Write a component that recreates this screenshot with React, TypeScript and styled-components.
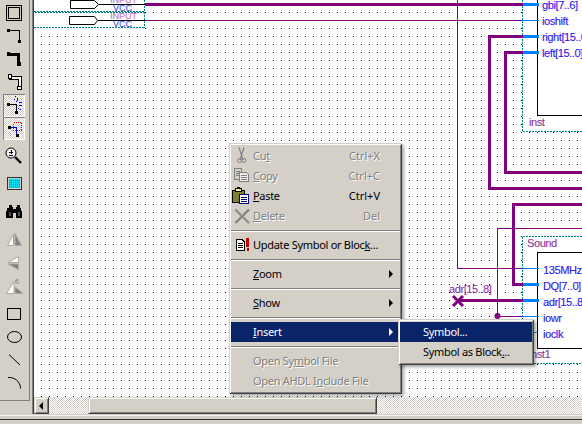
import React from "react";
import styled, { createGlobalStyle } from "styled-components";

const Global = createGlobalStyle`
  html, body { margin: 0; padding: 0; background: #d4d0c8; }
  #root { width: 582px; height: 424px; overflow: hidden; }
`;

const Root = styled.div`
  position: relative;
  width: 582px;
  height: 424px;
  overflow: hidden;
  background: #d4d0c8;
  display: flex;
  flex-direction: column;
  font-family: "Noto Sans", "Liberation Sans", sans-serif;
`;
const Workspace = styled.div`
  display: flex;
  height: 414px;
`;
const DockColumn = styled.div`
  width: 32px;
  flex: none;
`;
const Dock = styled.div`
  width: 30px;
  height: 401px;
  box-sizing: border-box;
  border-right: 1px solid #808080;
  border-bottom: 1px solid #808080;
  padding: 2px 0 0 3px;
  display: flex;
  flex-direction: column;
  gap: 5px;
`;
const ToolGroup = styled.div`
  display: flex;
  flex-direction: column;
`;
const ToolButton = styled.div<{ $on?: boolean }>`
  width: 22px;
  height: 23px;
  flex: none;
  box-sizing: border-box;
  ${(p) =>
    p.$on &&
    `background: repeating-conic-gradient(#d4d0c8 0 25%, #fff 0 50%) 0 0 / 2px 2px;
     box-shadow: inset 1px 1px 0 #808080, inset -1px -1px 0 #fff;`}
  svg { display: block; }
`;
const ViewColumn = styled.div`
  flex: 1;
  display: flex;
  flex-direction: column;
  border-left: 1px solid #808080;
  box-shadow: inset 1px 0 0 #404040;
  padding-left: 2px;
  min-width: 0;
`;
const Canvas = styled.div`
  position: relative;
  height: 397px;
  overflow: hidden;
  background: #fff;
  margin-left: -1px;
  svg { display: block; }
`;
const Label = styled.span<{ $x: number; $y: number; $tone: "pin" | "name" | "input" | "vcc" }>`
  position: absolute;
  left: ${(p) => p.$x}px;
  top: ${(p) => p.$y}px;
  font-family: "Liberation Sans", Arial, sans-serif;
  font-size: ${(p) => (p.$tone === "input" || p.$tone === "vcc" ? 9 : 11)}px;
  line-height: ${(p) => (p.$tone === "input" || p.$tone === "vcc" ? 8 : 12)}px;
  letter-spacing: ${(p) => (p.$tone === "input" || p.$tone === "vcc" ? 0 : -0.4)}px;
  white-space: nowrap;
  color: ${(p) =>
    p.$tone === "pin"
      ? "#2020f0"
      : p.$tone === "name"
      ? "#903090"
      : p.$tone === "input"
      ? "#d070a8"
      : "#3050f0"};
  text-shadow: ${(p) =>
    p.$tone === "pin" || p.$tone === "vcc"
      ? "0.5px 0 0 rgba(210,80,240,.35)"
      : "0.5px 0 0 rgba(90,90,255,.25)"};
`;
const Scrollbar = styled.div`
  height: 17px;
  display: flex;
  margin-left: -1px;
  background: repeating-conic-gradient(#d4d0c8 0 25%, #fff 0 50%) 0 0 / 2px 2px;
`;
const ScrollButton = styled.div`
  width: 15px;
  flex: none;
  box-sizing: border-box;
  background: #d4d0c8;
  border-top: 1px solid #d4d0c8;
  border-left: 1px solid #d4d0c8;
  border-right: 1px solid #404040;
  border-bottom: 1px solid #404040;
  box-shadow: inset 1px 1px 0 #fff, inset -1px -1px 0 #808080;
  display: flex;
  align-items: center;
  justify-content: center;
  svg { display: block; }
`;
const ScrollGap = styled.div`
  width: 39px;
  flex: none;
`;
const ScrollThumb = styled(ScrollButton)`
  width: 289px;
`;
const Footer = styled.div`
  height: 10px;
  box-sizing: border-box;
  background: #d4d0c8;
  padding-top: 1px;
  display: flex;
  flex-direction: column;
`;
const FooterLight = styled.div`
  height: 1px;
  background: #f4f2ee;
`;
const FooterDark = styled.div`
  height: 1px;
  margin-top: 3px;
  background: #303030;
`;

const Menu = styled.div<{ $x: number; $y: number; $w: number }>`
  position: absolute;
  left: ${(p) => p.$x}px;
  top: ${(p) => p.$y}px;
  width: ${(p) => p.$w}px;
  box-sizing: border-box;
  padding: 3px 2px;
  background: #d4d0c8;
  box-shadow: inset 1px 1px 0 #d4d0c8, inset -1px -1px 0 #404040, inset 2px 2px 0 #fff,
    inset -2px -2px 0 #808080, 2px 2px 3px rgba(0, 0, 0, 0.35);
  font-size: 11px;
`;
const Item = styled.div<{ $active?: boolean; $disabled?: boolean; $indent: number }>`
  display: flex;
  align-items: center;
  height: 20px;
  box-sizing: border-box;
  padding-left: ${(p) => p.$indent}px;
  padding-right: 20px;
  padding-bottom: 2px;
  position: relative;
  background: ${(p) => (p.$active ? "#0a246a" : "transparent")};
  color: ${(p) => (p.$active ? "#fff" : p.$disabled ? "#808080" : "#000")};
  text-shadow: ${(p) => (p.$disabled ? "1px 1px 0 #fff" : "none")};
  white-space: nowrap;
  u { text-underline-offset: 1px; }
`;
const ItemIcon = styled.span`
  position: absolute;
  left: 1px;
  top: 0;
  width: 20px;
  height: 20px;
  svg { display: block; }
`;
const ItemText = styled.span`
  flex: 1;
  letter-spacing: -0.3px;
`;
const Shortcut = styled.span`
  margin-left: auto;
`;
const Arrow = styled.span<{ $active?: boolean }>`
  position: absolute;
  right: 7px;
  top: 6px;
  width: 0;
  height: 0;
  border-left: 4px solid ${(p) => (p.$active ? "#fff" : "#000")};
  border-top: 4px solid transparent;
  border-bottom: 4px solid transparent;
`;
const Separator = styled.div`
  height: 9px;
  display: flex;
  align-items: center;
  &::before {
    content: "";
    display: block;
    flex: 1;
    height: 1px;
    background: #808080;
    border-bottom: 1px solid #fff;
  }
`;

type Wire = [number, number, number, number, string?];
const P = "#800080";
const B = "#0080ff";
const wires: Wire[] = [
  [145, 3, 378, 3],
  [523, 3, 16, 3, B],
  [144, 20, 378, 1],
  [522, 20, 17, 1, B],
  [457, 0, 1, 269],
  [457, 268, 65, 1],
  [522, 268, 17, 1, B],
  [488, 35, 35, 3],
  [523, 35, 16, 3, B],
  [488, 35, 3, 155],
  [488, 187, 94, 3],
  [504, 51, 19, 3],
  [523, 51, 16, 3, B],
  [504, 51, 3, 123],
  [504, 171, 78, 3],
  [512, 203, 70, 3],
  [512, 203, 3, 83],
  [512, 283, 11, 3],
  [523, 283, 16, 3, B],
  [497, 228, 85, 1],
  [497, 228, 1, 88],
  [497, 316, 26, 1],
  [522, 316, 17, 1, B],
  [457, 299, 66, 3],
  [523, 299, 16, 3, B],
  [522, 332, 16, 1, B],
  [99, 4, 46, 1, "#000"],
  [98, 20, 47, 1, "#000"],
];

const Diagram = () => (
  <svg width={548} height={397} viewBox="34 0 548 397" shapeRendering="crispEdges">
    <defs>
      <pattern id="dots" x={1} y={4} width={8} height={8} patternUnits="userSpaceOnUse">
        <rect width={1} height={1} fill="#000" />
      </pattern>
    </defs>
    <rect x={34} y={0} width={548} height={397} fill="url(#dots)" />
    <rect x={34} y={0} width={111} height={29} fill="#fff" />
    <rect x={522} y={0} width={60} height={132} fill="#fff" />
    <rect x={522} y={236} width={60} height={128} fill="#fff" />
    <g stroke="#008080" strokeDasharray="2 1" fill="none">
      <path d="M34 11.5H145M35 12.5H145M34 27.5H145M144.5 0V28" />
      <path d="M522.5 0V131.5H582M582 236.5H522.5V363.5H582" />
    </g>
    <g fill="#fff" stroke="#000" shapeRendering="auto">
      <path d="M70.5 .5H94.5L98.5 4.5L94.5 8.5H70.5Z" />
      <path d="M69.5 16.5H94.5L97.5 20.5L94.5 24.5H69.5Z" />
    </g>
    <rect x={537.5} y={-2} width={60} height={117.5} fill="#fff" stroke="#000" />
    <rect x={537.5} y={252.5} width={60} height={96} fill="#fff" stroke="#000" />
    {wires.map(([x, y, w, h, c], i) => (
      <rect key={i} x={x} y={y} width={w} height={h} fill={c ?? P} />
    ))}
    <circle cx={497.5} cy={316} r={3} fill={P} shapeRendering="auto" />
    <path d="M453 296L463 306M463 296L453 306" stroke={P} strokeWidth={3} shapeRendering="auto" />
  </svg>
);

const Slot = ({ children }: { children: React.ReactNode }) => (
  <svg width={22} height={23} viewBox="0 0 22 23">
    {children}
  </svg>
);

const tools: { on?: boolean; draw: React.ReactNode }[][] = [
  [
    {
      draw: (
        <g fill="none" stroke="#000" shapeRendering="crispEdges">
          <rect x={3.5} y={3.5} width={15} height={15} />
          <rect x={5.5} y={5.5} width={11} height={11} />
        </g>
      ),
    },
    {
      draw: (
        <g shapeRendering="crispEdges">
          <path d="M6 5.5H16.5V16" fill="none" stroke="#000" />
          <rect x={4} y={4} width={3} height={3} />
          <rect x={15} y={15} width={3} height={3} />
        </g>
      ),
    },
    {
      draw: (
        <g shapeRendering="crispEdges">
          <rect x={4} y={5} width={13} height={3} />
          <rect x={14} y={5} width={3} height={11} />
          <rect x={4} y={4} width={3} height={4} />
          <rect x={14} y={14} width={4} height={4} />
        </g>
      ),
    },
    {
      draw: (
        <g fill="none" shapeRendering="crispEdges">
          <path d="M6 6.5H16.5V18" stroke="#000" strokeWidth={4} />
          <path d="M6 6.5H16.5V18" stroke="#fff" strokeWidth={2} />
          <rect x={5.5} y={3.5} width={3} height={4} fill="#fff" stroke="#000" />
          <rect x={14.5} y={15.5} width={4} height={3} fill="#fff" stroke="#000" />
        </g>
      ),
    },
    {
      on: true,
      draw: (
        <g shapeRendering="crispEdges">
          <path d="M6 10.5H13.5V17" fill="none" stroke="#000" />
          <rect x={4} y={9} width={3} height={3} />
          <rect x={12} y={17} width={3} height={3} />
          <path
            d="M11 5h1v1h-1zM13 7h1v1h-1zM14 4h1v3h-1zM16 8h3v1h-3zM16 11h3v1h-3zM15 14h1v1h-1zM17 15h1v1h-1zM12 2h1v1h-1z"
            fill="#0000ff"
          />
        </g>
      ),
    },
    {
      on: true,
      draw: (
        <g shapeRendering="crispEdges">
          <rect x={10.5} y={5.5} width={8} height={8} fill="none" stroke="#e00000" strokeDasharray="1 1" />
          <path d="M7 10.5H13.5V17" fill="none" stroke="#0000e0" />
          <rect x={5} y={9} width={3} height={3} />
          <rect x={13} y={17} width={3} height={3} />
        </g>
      ),
    },
  ],
  [
    {
      draw: (
        <g fill="none" stroke="#000">
          <circle cx={8} cy={8} r={5} fill="#f4f4f4" />
          <path d="M12 12L18 18" strokeWidth={2.4} />
          <path d="M8 5V9M6 7H10M6 10.5H10" strokeWidth={1} shapeRendering="crispEdges" />
        </g>
      ),
    },
  ],
  [
    {
      draw: (
        <g shapeRendering="crispEdges">
          <rect x={4} y={4} width={15} height={13} fill="#303030" />
          <rect x={5} y={5} width={13} height={11} fill="#d4d0c8" />
          <rect x={6} y={6} width={11} height={9} fill="#00d8f0" />
          <path d="M6 7.5H17M6 9.5H17M6 11.5H17M6 13.5H17" stroke="#2080e0" strokeDasharray="1 1" />
        </g>
      ),
    },
  ],
  [
    {
      draw: (
        <g shapeRendering="crispEdges">
          <path d="M6 4h3v2h1v2h3V6h1V4h3v3h1v3h1v7h-6v-5h-3v5H3v-7h1V7h2z" />
          <path d="M6 11h2v4H6zM15 11h2v4h-2z" fill="#505050" />
        </g>
      ),
    },
  ],
  [
    {
      draw: (
        <g>
          <path d="M4.5 16.5L10.5 5V16.5Z" fill="#fff" stroke="#a8a8a4" />
          <path d="M12 4.5L18.5 16.5H12Z" fill="#808080" stroke="#a8a8a4" />
        </g>
      ),
    },
    {
      draw: (
        <g>
          <path d="M15.5 4.5L5 10.5H15.5Z" fill="#fff" stroke="#a8a8a4" />
          <path d="M5 12L15.5 17.5V12Z" fill="#808080" stroke="#a8a8a4" />
        </g>
      ),
    },
    {
      draw: (
        <g>
          <path d="M3.5 18.5L11 6V18.5Z" fill="#fff" stroke="#a8a8a4" />
          <path d="M12 12L20 18.5H12Z" fill="#808080" stroke="#a8a8a4" />
          <path d="M13 8V5M13 5H16M16 7L14 9" stroke="#808080" fill="none" />
        </g>
      ),
    },
  ],
  [
    { draw: <rect x={4.5} y={5.5} width={13} height={11} fill="none" stroke="#000" shapeRendering="crispEdges" /> },
    { draw: <ellipse cx={11.5} cy={11} rx={7} ry={5.5} fill="none" stroke="#000" /> },
    { draw: <path d="M6 5.5L17 16" stroke="#000" fill="none" /> },
    { draw: <path d="M5 5.5C11 5 17.5 9 17.5 16.5" stroke="#000" fill="none" /> },
  ],
];

const Icon = ({ children }: { children: React.ReactNode }) => (
  <ItemIcon>
    <svg width={20} height={20} viewBox="0 0 20 20">
      {children}
    </svg>
  </ItemIcon>
);

const ScissorsIcon = () => (
  <Icon>
    <g fill="none" stroke="#808080">
      <path d="M7 1.5L9.5 9L8 14M12 1.5L9.5 9L11 14" strokeWidth={1.2} />
      <circle cx={7.5} cy={14.5} r={2} />
      <circle cx={12} cy={14.5} r={2} />
    </g>
  </Icon>
);
const CopyIcon = () => (
  <Icon>
    <g fill="#d4d0c8" stroke="#808080" shapeRendering="crispEdges">
      <path d="M2.5 2.5H9.5V13.5H2.5Z" />
      <path d="M7.5 6.5H14.5L16.5 8.5V15.5H7.5Z" fill="#eeece8" />
      <path d="M4 5.5H8M4 7.5H7M4 9.5H7M9 9.5H15M9 11.5H15M9 13.5H15" />
    </g>
  </Icon>
);
const PasteIcon = () => (
  <Icon>
    <g shapeRendering="crispEdges">
      <rect x={0.5} y={4.5} width={12} height={12} fill="#808030" stroke="#000" />
      <rect x={3.5} y={2.5} width={6} height={3} fill="#ffff80" stroke="#000" />
      <rect x={5} y={1} width={3} height={2} fill="#000" />
      <rect x={7.5} y={8.5} width={9} height={9} fill="#fff" stroke="#000080" />
      <path d="M9 11.5H15M9 13.5H15M9 15.5H15" stroke="#000080" />
    </g>
  </Icon>
);
const DeleteIcon = () => (
  <Icon>
    <path d="M3.5 3.5L17 17M17 3.5L3.5 17" stroke="#808080" strokeWidth={2.2} fill="none" />
    <path d="M4 3.5L17 16.5" stroke="#a8a8a4" strokeWidth={1} fill="none" />
  </Icon>
);
const UpdateIcon = () => (
  <Icon>
    <g shapeRendering="crispEdges">
      <path d="M4.5 4.5H10L12 6.5V15.5H4.5Z" fill="#fff" stroke="#000" />
      <path d="M6 8.5H10.5M6 10.5H10.5M6 12.5H10.5" stroke="#000" />
      <rect x={14} y={3} width={3} height={9} fill="#c00000" />
      <rect x={15} y={13} width={2} height={3} fill="#c00000" />
    </g>
  </Icon>
);

const Text = ({ pre, u, post }: { pre?: string; u: string; post?: string }) => (
  <ItemText>
    {pre}
    <u>{u}</u>
    {post}
  </ItemText>
);

const labels: [number, number, "pin" | "name" | "input" | "vcc", string][] = [
  [76, -4, "input", "INPUT"],
  [79, 4, "vcc", "VCC"],
  [76, 12, "input", "INPUT"],
  [79, 20, "vcc", "VCC"],
  [508, -1, "pin", "gbi[7..6]"],
  [508, 15, "pin", "ioshift"],
  [508, 31, "pin", "right[15..0]"],
  [508, 47, "pin", "left[15..0]"],
  [495, 116, "name", "inst"],
  [493, 237, "name", "Sound"],
  [509, 264, "pin", "135MHz"],
  [509, 280, "pin", "DQ[7..0]"],
  [509, 296, "pin", "adr[15..8]"],
  [509, 312, "pin", "iowr"],
  [509, 328, "pin", "ioclk"],
  [495, 348, "name", "inst1"],
  [415, 283, "name", "adr[15..8]"],
];

export default function App() {
  return (
    <Root>
      <Global />
      <Workspace>
        <DockColumn>
          <Dock>
            {tools.map((group, g) => (
              <ToolGroup key={g}>
                {group.map((t, i) => (
                  <ToolButton key={i} $on={t.on}>
                    <Slot>{t.draw}</Slot>
                  </ToolButton>
                ))}
              </ToolGroup>
            ))}
          </Dock>
        </DockColumn>
        <ViewColumn>
          <Canvas>
            <Diagram />
            {labels.map(([x, y, tone, text], i) => (
              <Label key={i} $x={x} $y={y} $tone={tone}>
                {text}
              </Label>
            ))}
          </Canvas>
          <Scrollbar>
            <ScrollButton>
              <svg width={5} height={8} viewBox="0 0 5 8">
                <path d="M4 0V8L0 4Z" fill="#000" />
              </svg>
            </ScrollButton>
            <ScrollGap />
            <ScrollThumb />
          </Scrollbar>
        </ViewColumn>
      </Workspace>
      <Footer>
        <FooterLight />
        <FooterDark />
      </Footer>

      <Menu $x={229} $y={143} $w={173}>
        <Item $disabled $indent={22}>
          <ScissorsIcon />
          <Text pre="Cu" u="t" />
          <Shortcut>Ctrl+X</Shortcut>
        </Item>
        <Item $disabled $indent={22}>
          <CopyIcon />
          <Text u="C" post="opy" />
          <Shortcut>Ctrl+C</Shortcut>
        </Item>
        <Item $indent={22}>
          <PasteIcon />
          <Text u="P" post="aste" />
          <Shortcut>Ctrl+V</Shortcut>
        </Item>
        <Item $disabled $indent={22}>
          <DeleteIcon />
          <Text u="D" post="elete" />
          <Shortcut>Del</Shortcut>
        </Item>
        <Separator />
        <Item $indent={22}>
          <UpdateIcon />
          <Text pre="Update Symbol or Bloc" u="k" post="..." />
        </Item>
        <Separator />
        <Item $indent={22}>
          <Text u="Z" post="oom" />
          <Arrow />
        </Item>
        <Separator />
        <Item $indent={22}>
          <Text u="S" post="how" />
          <Arrow />
        </Item>
        <Separator />
        <Item $active $indent={22}>
          <Text u="I" post="nsert" />
          <Arrow $active />
        </Item>
        <Separator />
        <Item $disabled $indent={22}>
          <Text pre="Open Sy" u="m" post="bol File" />
        </Item>
        <Item $disabled $indent={22}>
          <Text pre="Open AHDL I" u="n" post="clude File" />
        </Item>
      </Menu>

      <Menu $x={398} $y={319} $w={136}>
        <Item $active $indent={23}>
          <Text pre="S" u="y" post="mbol..." />
        </Item>
        <Item $indent={23}>
          <Text pre="Symbol as Block" u="." post=".." />
        </Item>
      </Menu>
    </Root>
  );
}
